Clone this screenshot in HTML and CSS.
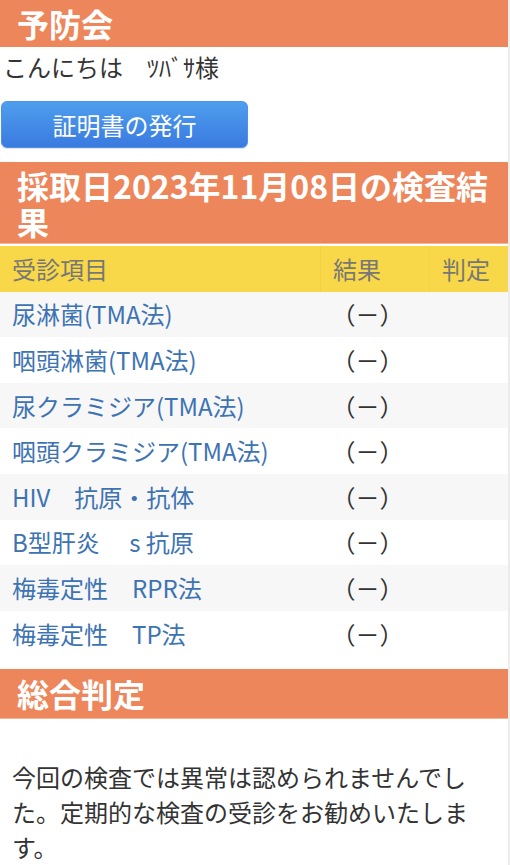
FILE: index.html
```html
<!DOCTYPE html>
<html lang="ja">
<head>
    <meta charset="UTF-8">
    <meta name="viewport" content="width=device-width, initial-scale=1.0">
    <title>予防会 検査結果</title>
    <link rel="stylesheet" href="styles.css">
</head>
<body>
    <div class="page">
        <h1 class="bar">予防会</h1>
        <p class="greeting">こんにちは　ﾂﾊﾞｻ様</p>
        <button class="btn" type="button">証明書の発行</button>

        <h2 class="bar bar-multi">採取日2023年11月08日の検査結果</h2>
        <table class="results">
            <thead>
                <tr>
                    <th class="col-item">受診項目</th>
                    <th class="col-result">結果</th>
                    <th class="col-judge">判定</th>
                </tr>
            </thead>
            <tbody>
                <tr><td class="item">尿淋菌(TMA法)</td><td class="result">（－）</td><td></td></tr>
                <tr><td class="item">咽頭淋菌(TMA法)</td><td class="result">（－）</td><td></td></tr>
                <tr><td class="item">尿クラミジア(TMA法)</td><td class="result">（－）</td><td></td></tr>
                <tr><td class="item">咽頭クラミジア(TMA法)</td><td class="result">（－）</td><td></td></tr>
                <tr><td class="item">HIV　抗原・抗体</td><td class="result">（－）</td><td></td></tr>
                <tr><td class="item">B型肝炎　 s 抗原</td><td class="result">（－）</td><td></td></tr>
                <tr><td class="item">梅毒定性　RPR法</td><td class="result">（－）</td><td></td></tr>
                <tr><td class="item">梅毒定性　TP法</td><td class="result">（－）</td><td></td></tr>
            </tbody>
        </table>

        <h2 class="bar bar-summary">総合判定</h2>
        <p class="summary">今回の検査では異常は認められませんでした。定期的な検査の受診をお勧めいたします。</p>
    </div>
</body>
</html>
```

FILE: styles.css
```css
html, body {
    margin: 0;
    padding: 0;
    background: #fff;
}

body {
    font-family: "Noto Sans CJK JP", "Noto Sans", sans-serif;
    font-size: 24px;
    color: #333;
}

.page {
    width: 508px;
    min-height: 865px;
    border-right: 2px solid #ececec;
}

.bar {
    margin: 0;
    padding: 5px 17px;
    background: #ee865c;
    color: #fff;
    font-size: 32px;
    font-weight: bold;
    line-height: 37px;
}

.bar-multi {
    margin-top: 14px;
    line-height: 36px;
    border-bottom: 1px solid #f4b496;
    padding-bottom: 4px;
}

.bar-summary {
    margin-top: 13px;
    padding: 6px 17px 6px;
    border-bottom: 1px solid #f4b496;
}

.greeting {
    margin: 2px 0 0 3px;
    line-height: 36px;
    color: #333;
}

.btn {
    display: block;
    margin: 16px 0 0 1px;
    width: 247px;
    height: 47px;
    padding: 0;
    border: 1px solid #4f92e6;
    border-radius: 6px;
    background: linear-gradient(#4e9eee, #3a7ae0);
    box-shadow: 0 1px 1px rgba(0, 0, 0, 0.12);
    color: #fff;
    font-family: inherit;
    font-size: 24px;
    line-height: 45px;
}

.results {
    width: 100%;
    margin-top: 2px;
    border-collapse: collapse;
    table-layout: fixed;
}

.results th,
.results td {
    padding: 4.8px 12px;
    line-height: 36px;
    text-align: left;
    font-weight: normal;
    white-space: nowrap;
}

.results th {
    background: #f8d748;
    color: #777;
    border-left: 1px solid #f2d044;
}

.results th:first-child {
    border-left: none;
}

.col-item { width: 296px; }
.col-result { width: 84px; }

.results tbody tr:nth-child(odd) {
    background: #f7f7f7;
}

.item {
    color: #3d73b3;
}

.results .result {
    padding-left: 11px;
    color: #333;
}

.summary {
    margin: 40px 24px 0 12px;
    line-height: 35px;
    color: #333;
}
```
